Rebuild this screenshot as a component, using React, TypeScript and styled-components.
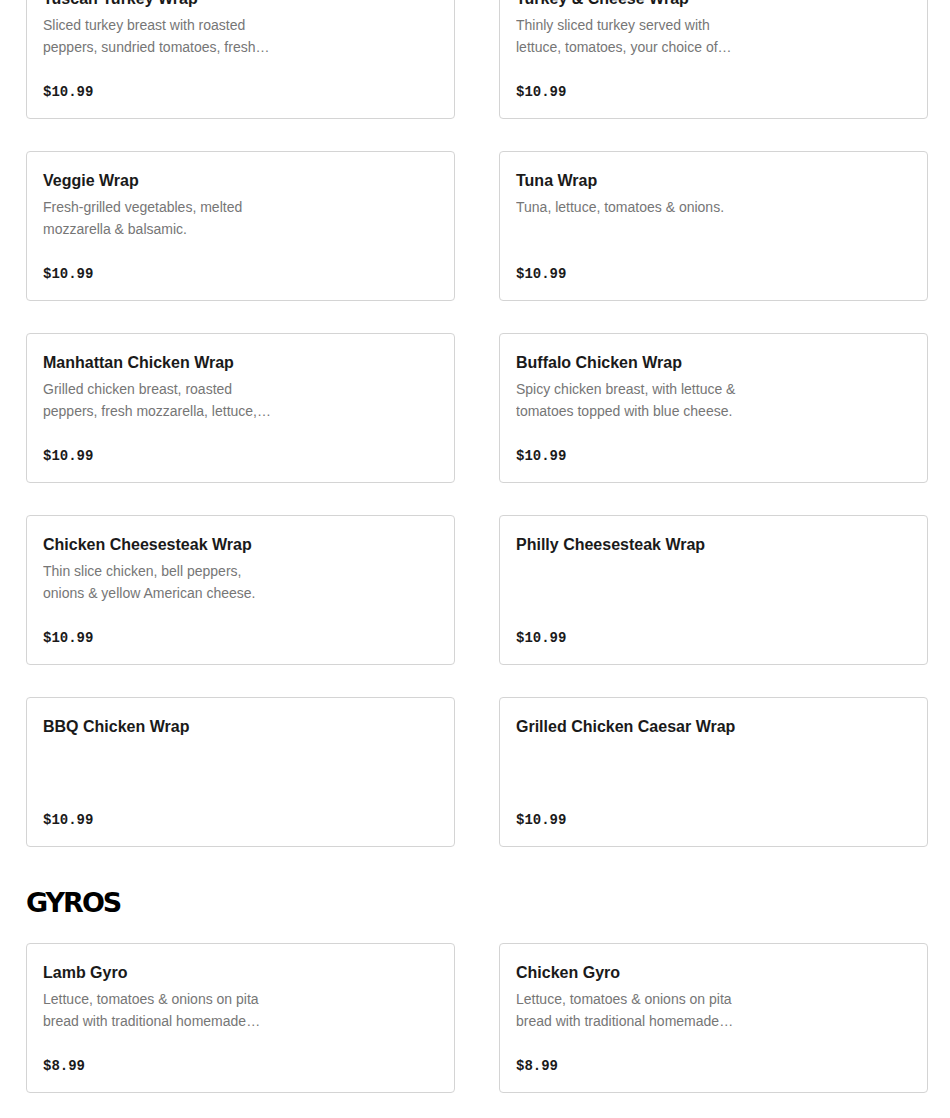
import React from "react";
import styled, { createGlobalStyle } from "styled-components";

const GlobalStyle = createGlobalStyle`
  html, body {
    margin: 0;
    padding: 0;
    background: #ffffff;
  }
  body {
    font-family: "Liberation Sans", Arial, sans-serif;
    color: #191919;
    overflow: hidden;
  }
  * { box-sizing: border-box; }
`;

const Page = styled.main`
  margin-top: -31px;
  padding: 0 22px 40px 26px;
`;

const Section = styled.section`
  & + & {
    margin-top: 40px;
  }
`;

const SectionTitle = styled.h2`
  margin: 0 0 24px;
  font-family: "DejaVu Sans", "Liberation Sans", sans-serif;
  font-weight: 700;
  font-size: 27px;
  line-height: 32px;
  letter-spacing: -2px;
  color: #000000;
`;

const Grid = styled.div`
  display: grid;
  grid-template-columns: 1fr 1fr;
  column-gap: 44px;
  row-gap: 32px;
`;

const Card = styled.article`
  height: 150px;
  border: 1px solid #d4d4d4;
  border-radius: 4px;
  background: #ffffff;
  padding: 17px 16px 16px;
  display: flex;
  flex-direction: column;
`;

const ItemName = styled.h3`
  margin: 0;
  font-size: 16px;
  line-height: 24px;
  font-weight: 700;
  color: #1a1a1a;
`;

const ItemDesc = styled.p`
  margin: 3px 0 0;
  max-width: 240px;
  font-size: 14px;
  line-height: 22px;
  color: #767676;
  height: 44px;
  display: -webkit-box;
  -webkit-line-clamp: 2;
  -webkit-box-orient: vertical;
  overflow: hidden;
`;

const Price = styled.span`
  margin-top: auto;
  font-family: "Liberation Mono", "Courier New", monospace;
  font-weight: 700;
  font-size: 14px;
  line-height: 20px;
  color: #1a1a1a;
`;

type Item = { name: string; desc?: string; price: string };

const wraps: Item[] = [
  {
    name: "Tuscan Turkey Wrap",
    desc: "Sliced turkey breast with roasted peppers, sundried tomatoes, fresh mozzarella, lettuce & balsamic.",
    price: "$10.99",
  },
  {
    name: "Turkey & Cheese Wrap",
    desc: "Thinly sliced turkey served with lettuce, tomatoes, your choice of cheese & mayo.",
    price: "$10.99",
  },
  {
    name: "Veggie Wrap",
    desc: "Fresh-grilled vegetables, melted mozzarella & balsamic.",
    price: "$10.99",
  },
  { name: "Tuna Wrap", desc: "Tuna, lettuce, tomatoes & onions.", price: "$10.99" },
  {
    name: "Manhattan Chicken Wrap",
    desc: "Grilled chicken breast, roasted peppers, fresh mozzarella, lettuce, tomatoes & balsamic.",
    price: "$10.99",
  },
  {
    name: "Buffalo Chicken Wrap",
    desc: "Spicy chicken breast, with lettuce & tomatoes topped with blue cheese.",
    price: "$10.99",
  },
  {
    name: "Chicken Cheesesteak Wrap",
    desc: "Thin slice chicken, bell peppers, onions & yellow American cheese.",
    price: "$10.99",
  },
  { name: "Philly Cheesesteak Wrap", price: "$10.99" },
  { name: "BBQ Chicken Wrap", price: "$10.99" },
  { name: "Grilled Chicken Caesar Wrap", price: "$10.99" },
];

const gyros: Item[] = [
  {
    name: "Lamb Gyro",
    desc: "Lettuce, tomatoes & onions on pita bread with traditional homemade tzatziki sauce.",
    price: "$8.99",
  },
  {
    name: "Chicken Gyro",
    desc: "Lettuce, tomatoes & onions on pita bread with traditional homemade tzatziki sauce.",
    price: "$8.99",
  },
];

const MenuCard = ({ item }: { item: Item }) => (
  <Card>
    <ItemName>{item.name}</ItemName>
    <ItemDesc>{item.desc ?? ""}</ItemDesc>
    <Price>{item.price}</Price>
  </Card>
);

export default function App() {
  return (
    <>
      <GlobalStyle />
      <Page>
        <Section>
          <Grid>
            {wraps.map((it) => (
              <MenuCard key={it.name} item={it} />
            ))}
          </Grid>
        </Section>
        <Section>
          <SectionTitle>GYROS</SectionTitle>
          <Grid>
            {gyros.map((it) => (
              <MenuCard key={it.name} item={it} />
            ))}
          </Grid>
        </Section>
      </Page>
    </>
  );
}
